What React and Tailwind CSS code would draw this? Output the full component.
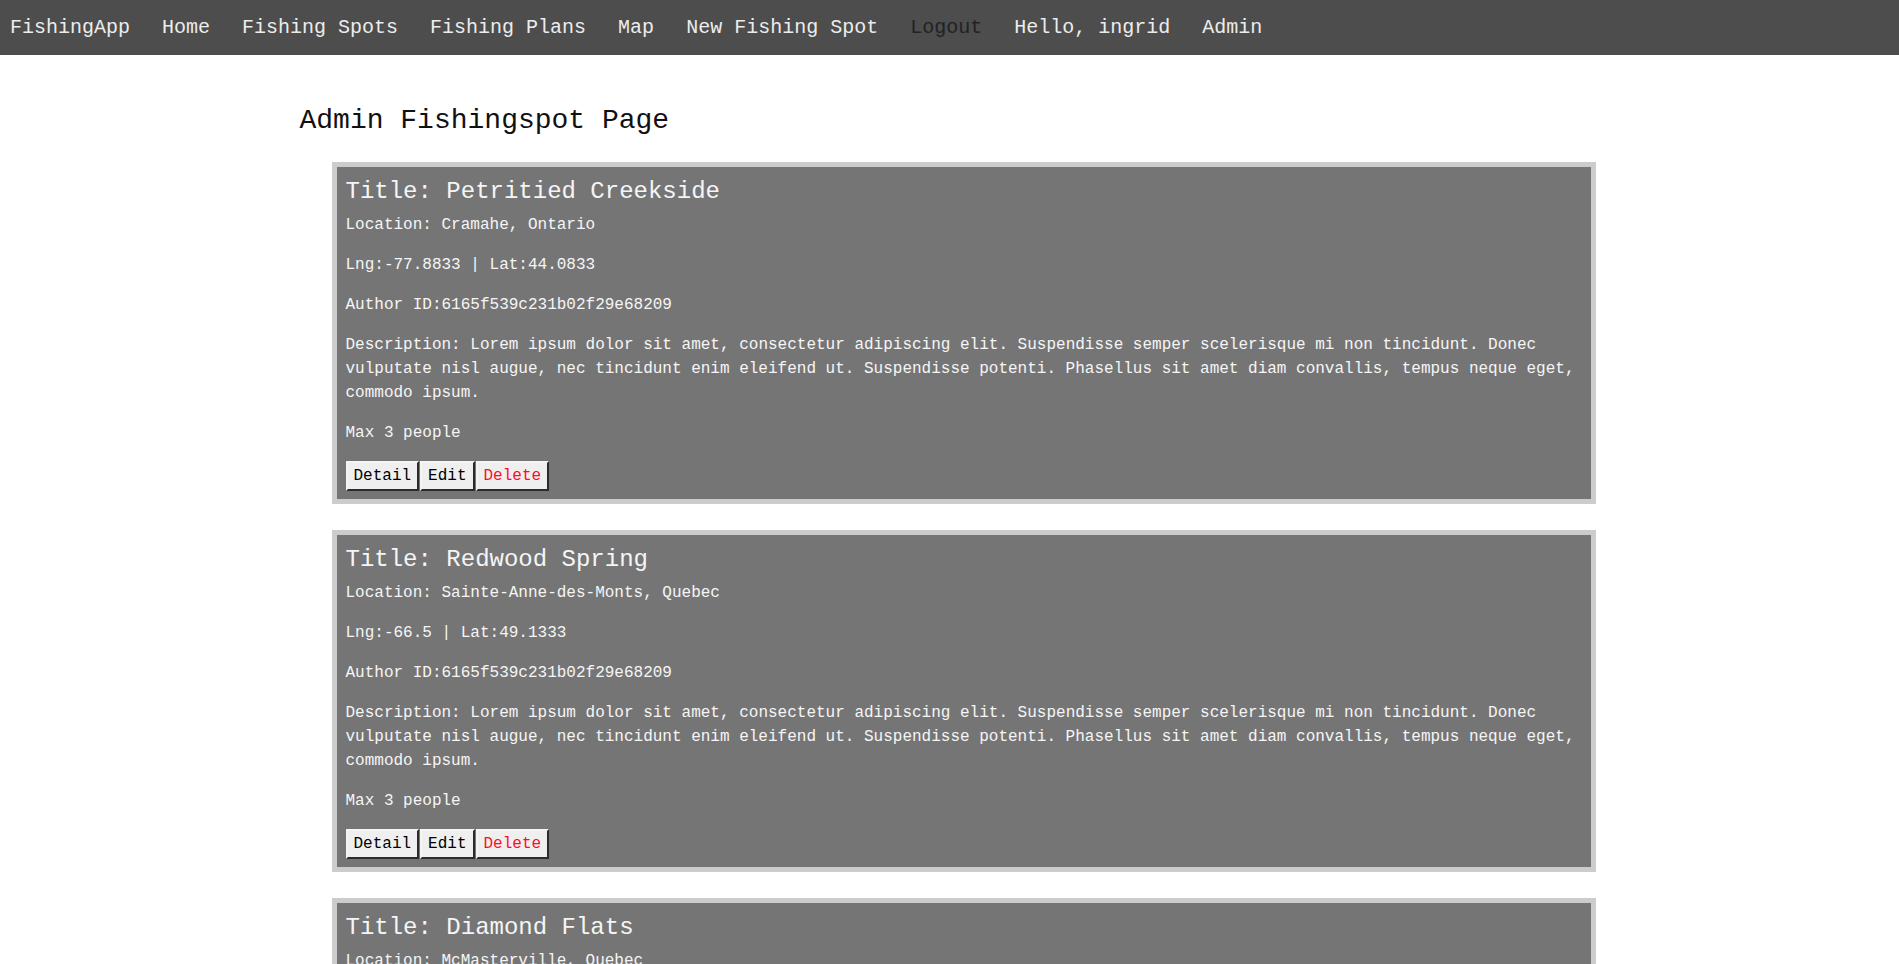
import React from 'react';

const spots = [
  {
    title: 'Petritied Creekside',
    location: 'Cramahe, Ontario',
    lng: '-77.8833',
    lat: '44.0833',
  },
  {
    title: 'Redwood Spring',
    location: 'Sainte-Anne-des-Monts, Quebec',
    lng: '-66.5',
    lat: '49.1333',
  },
  {
    title: 'Diamond Flats',
    location: 'McMasterville, Quebec',
    lng: '-73.2167',
    lat: '45.55',
  },
];

const description =
  'Lorem ipsum dolor sit amet, consectetur adipiscing elit. Suspendisse semper scelerisque mi non tincidunt. Donec vulputate nisl augue, nec tincidunt enim eleifend ut. Suspendisse potenti. Phasellus sit amet diam convallis, tempus neque eget, commodo ipsum.';

const btn =
  'bg-[#efefef] border-2 border-t-[#f4f4f4] border-l-[#f4f4f4] border-r-[#2b2b2b] border-b-[#2b2b2b] px-[6px] h-[30px] text-[16px] leading-[18px]';

const SpotCard = ({ spot }) => (
  <div className="ml-8 w-[1264px] border-[5px] border-[#cccccc] bg-[#757575] px-[9px] pt-[7px] pb-[8px] text-[#f5f5f5]">
    <h2 className="text-[24px] leading-[36px]">Title: {spot.title}</h2>
    <p className="mt-[3px] text-[16px] leading-6">Location: {spot.location}</p>
    <p className="mt-4 text-[16px] leading-6">
      Lng:{spot.lng} | Lat:{spot.lat}
    </p>
    <p className="mt-4 text-[16px] leading-6">Author ID:6165f539c231b02f29e68209</p>
    <p className="mt-4 text-[16px] leading-6">Description: {description}</p>
    <p className="mt-4 text-[16px] leading-6">Max 3 people</p>
    <div className="mt-4 flex gap-[1px]">
      <button className={`${btn} text-black`}>Detail</button>
      <button className={`${btn} text-black`}>Edit</button>
      <button className={`${btn} text-[#ff0a2a]`}>Delete</button>
    </div>
  </div>
);

export default function App() {
  return (
    <div className="min-h-screen bg-white" style={{ fontFamily: '"Liberation Mono", "Courier New", monospace' }}>
      {/* Top navigation */}
      <nav className="flex h-[55px] items-center gap-8 bg-[#4d4d4d] pl-[10px] text-[20px] text-[#ececec]">
        <a href="#">FishingApp</a>
        <a href="#">Home</a>
        <a href="#">Fishing Spots</a>
        <a href="#">Fishing Plans</a>
        <a href="#">Map</a>
        <a href="#">New Fishing Spot</a>
        <a href="#" className="text-[#222222]">Logout</a>
        <span>Hello, ingrid</span>
        <a href="#">Admin</a>
      </nav>

      <main className="mx-auto w-[1300px]">
        <h1 className="mt-[45px] text-[28px] leading-[42px] text-[#111111]">Admin Fishingspot Page</h1>
        <div className="mt-5 flex flex-col gap-[26px] pb-10">
          {spots.map((s) => (
            <SpotCard key={s.title} spot={s} />
          ))}
        </div>
      </main>
    </div>
  );
}
